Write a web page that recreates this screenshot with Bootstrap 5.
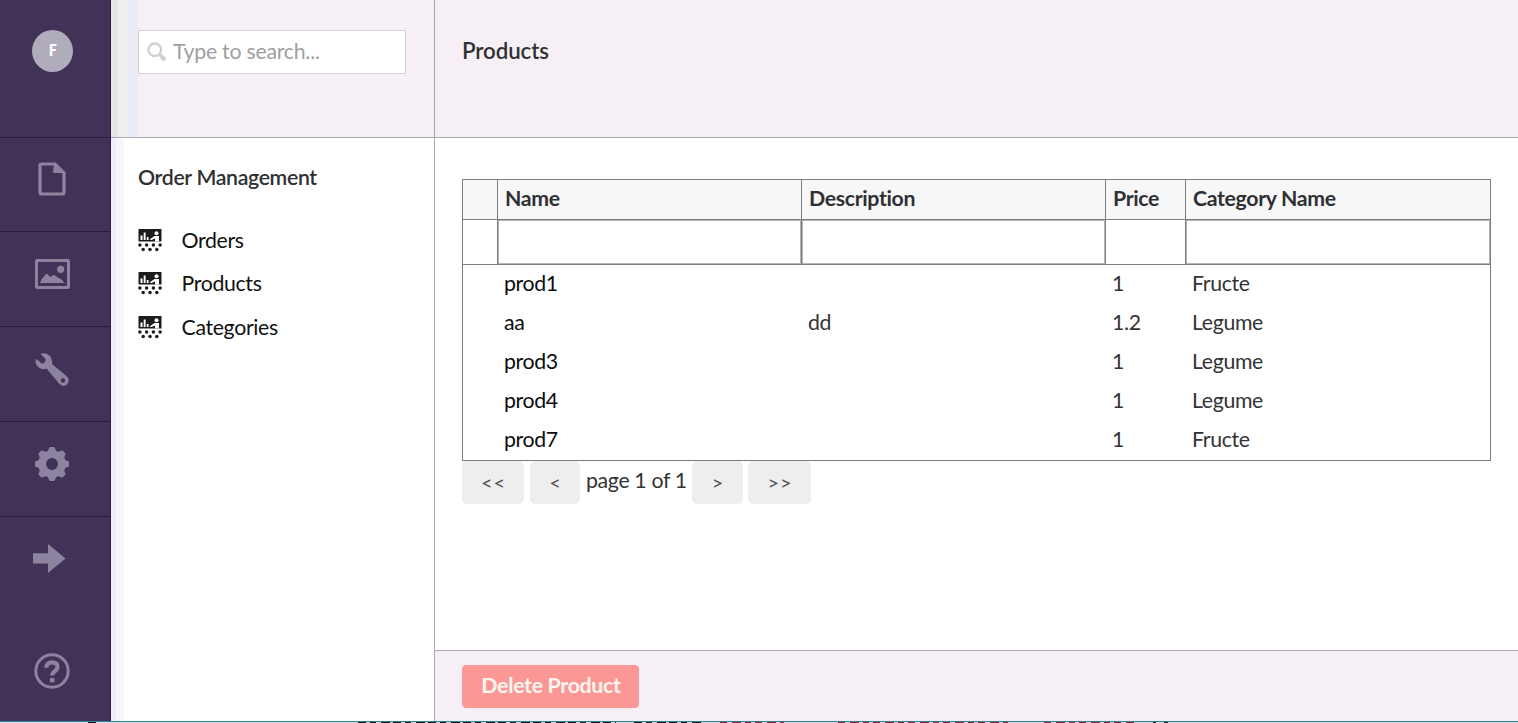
<!DOCTYPE html>
<html lang="en">
<head>
<meta charset="utf-8">
<meta name="viewport" content="width=device-width, initial-scale=1">
<title>Products</title>
<link href="https://cdn.jsdelivr.net/npm/bootstrap@5.3.0/dist/css/bootstrap.min.css" rel="stylesheet">
<style>
  body { font-family: Lato, "Liberation Sans", sans-serif; font-size: 21.3px; line-height: 28px; letter-spacing: -.35px; color: #343434; overflow: hidden; }
  .app-shell { height: 721px; }
  .rail { width: 111px; background: #413358; border-right: 1px solid #2b1f42; }
  .rail-cell { height: 95px; border-top: 1px solid #291c42; color: #8d839e; padding-right: 6px; }
  .rail-cell:nth-child(2) { height: 94px; }
  .rail-cell svg, .rail-help svg { display: block; }
  .rail-user { height: 137px; padding: 30px 0 0 32px; }
  .avatar { width: 41px; height: 42px; background: #b1acbc; color: #fff; font: 700 15.5px/40px "Open Sans", sans-serif; text-align: center; }
  .rail-help { color: #8d839e; padding: 0 6px 32px 0; }
  .tree { width: 324px; border-right: 1px solid #aba8b5; background: linear-gradient(90deg, #f0eff9 5px, #f7f7f7 5px 13px, #fff 13px); }
  .tree-head { height: 138px; border-bottom: 1px solid #aeabb5; padding: 30px 28px 0 27px; background: linear-gradient(90deg, #e5e5e5 7px, #eee 7px 17px, #ececf7 17px 27px, #f6eff6 27px); }
  .search-box { height: 44px; border: 1px solid #d5d3d7; background: #fff; padding: 0 8px; gap: 6px; }
  .search-box input { border: 0; padding: 0 0 2px; outline: 0; background: none; min-width: 0; line-height: 28px; letter-spacing: -.25px; }
  .search-box input::placeholder { color: #a0a0a0; opacity: 1; }
  .tree-body { padding: 25px 27px 0; }
  .strong-text { font-weight: 600; color: #303033; }
  .tree-title { margin: 0 0 35px; font-size: 21.3px; line-height: 28px; }
  .tree-link { height: 43.5px; color: #111; gap: 19.5px; text-decoration: none; }
  .tree-link:nth-of-type(1) { height: 43px; }
  .tree-link:nth-of-type(2) { height: 44px; }
  .tree-link svg { margin-top: 2px; }
  .editor-head { height: 138px; border-bottom: 1px solid #aeabb5; background: #f6eff6; padding: 37px 27px 0; font-size: 22.3px; letter-spacing: -.1px; }
  .editor-body { padding: 41px 27px 0; }
  .editor-foot { height: 71px; border-top: 1px solid #aeabb5; background: #f6eff6; padding: 14px 27px 0; }
  .grid-table { width: 1029px; table-layout: fixed; border-collapse: collapse; border: 1px solid #7c7c7c; }
  .grid-table th { height: 40px; padding: 0 7px 3px; border: 1px solid #7c7c7c; background: #f7f7f8; white-space: nowrap; }
  .grid-table .filters td { height: 45px; padding: 0; border: 1px solid #7c7c7c; }
  .filters input { display: block; width: 100%; height: 44px; border: 1px solid #b5b5b5; border-radius: 0; padding: 0 6px; outline: 0; }
  .grid-table tbody td { height: 39px; padding: 0 6.5px 2px; vertical-align: middle; }
  .grid-table tbody tr:last-child td { height: 40px; padding-bottom: 3px; }
  .grid-table tbody td:nth-child(2) { color: #0c0c0c; }
  .pager { gap: 6px; }
  .pager-text { width: 100px; padding-top: 5px; white-space: nowrap; }
  .pager .btn { --bs-btn-font-size: 20px; --bs-btn-bg: #eee; --bs-btn-color: #555; --bs-btn-border-color: #eee; height: 43px; padding: 0 0 2px 1px; border-radius: 5px; letter-spacing: .8px; }
  .pager .btn:last-child { margin-left: -1px; }
  .btn-delete { --bs-btn-bg: #fb9896; --bs-btn-color: #fdf5ef; --bs-btn-border-color: #fb9896; width: 177px; height: 43px; padding: 0 0 2px 1px; border-radius: 4px; font-size: 21.3px; font-weight: 700; line-height: 39px; letter-spacing: -.3px; }
  .desk-edge { height: 2px; border-top: 1px solid #357fa5; background: #d5dbe4; }
  .desk-edge svg { display: block; }
</style>
</head>
<body>
<svg class="d-none">
  <symbol id="presentation" viewBox="0 0 24 24">
    <path d="M.500 1h23v12.500H.500z" fill="#1c1c1c"/>
    <path d="M2.500 7.500h2V12h-2zM5.700 4.500h1.900V12H5.700zM8.800 9h1.700v3H8.800z" fill="#fff"/>
    <circle cx="18.500" cy="5.300" r="2" fill="#fff"/>
    <path d="M11.500 11.500l5-3.500H21v5.500h-4v-3l-3.500 1.500z" fill="#fff"/>
    <g fill="#1c1c1c"><circle cx="1.900" cy="17" r="1.750"/><circle cx="8.600" cy="17" r="1.750"/><circle cx="15.400" cy="17" r="1.750"/><circle cx="22.100" cy="17" r="1.750"/><circle cx="5.200" cy="21.500" r="1.750"/><circle cx="12" cy="21.500" r="1.750"/><circle cx="18.800" cy="21.500" r="1.750"/></g>
  </symbol>
</svg>

<div class="app-shell d-flex">
  <nav class="rail d-flex flex-column flex-shrink-0">
    <div class="rail-user"><div class="avatar rounded-circle">F</div></div>
    <a class="rail-cell d-flex align-items-center justify-content-center" href="#" aria-label="Content">
      <svg width="28" height="34" viewBox="0 0 28 34" style="margin-top:-12px"><path d="M2 3.500Q2 2 3.500 2H17l9 9v19.500Q26 32 24.500 32h-21Q2 32 2 30.500z" fill="none" stroke="currentColor" stroke-width="3.200"/><path d="M16 1l11 10H15z" fill="currentColor"/></svg>
    </a>
    <a class="rail-cell d-flex align-items-center justify-content-center" href="#" aria-label="Media">
      <svg width="35" height="30" viewBox="0 0 35 30" style="margin-top:-10px"><rect x="1.500" y="1.500" width="32" height="27" rx="1" fill="none" stroke="currentColor" stroke-width="3"/><circle cx="25.700" cy="10.300" r="3.600" fill="currentColor"/><path d="M5 24l1.500-3.500 4.500-5.500h1.500l2.500 3 3-1.800h1.500L27 21l2.300 3z" fill="currentColor"/></svg>
    </a>
    <a class="rail-cell d-flex align-items-center justify-content-center" href="#" aria-label="Settings">
      <svg width="34" height="34" viewBox="0 0 34 34" style="margin-top:-9px"><path d="M5.500.8L10.500 6Q11 9 8.500 10.200L7 10.500.9 5.800Q-.5 11.500 4.500 15 8 17 11.500 15.500L24 30.500Q28 34.500 31.500 31.800 35.500 28 32 23.500L17 11Q18 6 14.500 2.500 10.500-.9 5.500.8zM28 25.300a2.200 2.200 0 1 1 0 4.400 2.200 2.200 0 0 1 0-4.400z" fill="currentColor" fill-rule="evenodd"/></svg>
    </a>
    <a class="rail-cell d-flex align-items-center justify-content-center" href="#" aria-label="Developer">
      <svg width="34" height="34" viewBox="-17 -17 34 34" style="margin-top:-10px"><defs><path id="cog" d="M-4.500-12l1.700-4.300q.3-.7 1-.7h3.600q.7 0 1 .7L4.500-12z"/></defs><g fill="currentColor"><path d="M0-13.800a13.800 13.800 0 1 1 0 27.600 13.800 13.800 0 0 1 0-27.600zM0-6a6 6 0 1 0 0 12A6 6 0 0 0 0-6z" fill-rule="evenodd"/><use href="#cog"/><use href="#cog" transform="rotate(45)"/><use href="#cog" transform="rotate(90)"/><use href="#cog" transform="rotate(135)"/><use href="#cog" transform="rotate(180)"/><use href="#cog" transform="rotate(225)"/><use href="#cog" transform="rotate(270)"/><use href="#cog" transform="rotate(315)"/></g></svg>
    </a>
    <a class="rail-cell d-flex align-items-center justify-content-center" href="#" aria-label="Users">
      <svg width="33" height="29" viewBox="0 0 33 29" style="margin:-12px 6px 0 0"><path d="M0 9.300h15V0l17.500 14.500L15 29v-9.500H0z" fill="currentColor"/></svg>
    </a>
    <a class="rail-help mt-auto d-flex justify-content-center" href="#" aria-label="Help">
      <svg width="36" height="36" viewBox="0 0 36 36"><circle cx="18" cy="18" r="16.200" fill="none" stroke="currentColor" stroke-width="3"/><path d="M12.300 14.800q0-5.500 5.700-5.500 5.500 0 5.500 4.700 0 2.500-2.700 4.200-2.500 1.600-2.500 4.300" fill="none" stroke="currentColor" stroke-width="4.200"/><path d="M16 25h4.500v4.300H16z" fill="currentColor"/></svg>
    </a>
  </nav>

  <aside class="tree flex-shrink-0">
    <div class="tree-head">
      <label class="search-box d-flex align-items-center">
        <svg class="flex-shrink-0" width="20" height="20" viewBox="0 0 20 20" fill="none" stroke="#d0d0d0"><circle cx="7.800" cy="7.800" r="6.300" stroke-width="2.400"/><path d="M12.300 12.300l1.500 1.500" stroke-width="2.400"/><path d="M13.500 13.500l4.500 4.500" stroke-width="4"/></svg>
        <input class="flex-grow-1" type="text" placeholder="Type to search...">
      </label>
    </div>
    <div class="tree-body">
      <h5 class="tree-title strong-text">Order Management</h5>
      <a class="tree-link d-flex" href="#"><svg width="24" height="24"><use href="#presentation"/></svg>Orders</a>
      <a class="tree-link d-flex" href="#"><svg width="24" height="24"><use href="#presentation"/></svg>Products</a>
      <a class="tree-link d-flex" href="#"><svg width="24" height="24"><use href="#presentation"/></svg>Categories</a>
    </div>
  </aside>

  <main class="d-flex flex-column flex-grow-1">
    <header class="editor-head strong-text">Products</header>
    <section class="editor-body flex-grow-1">
      <table class="grid-table">
        <colgroup><col style="width:35px"><col style="width:304px"><col style="width:304px"><col style="width:80px"><col style="width:305px"></colgroup>
        <thead>
          <tr class="strong-text"><th></th><th>Name</th><th>Description</th><th>Price</th><th>Category Name</th></tr>
          <tr class="filters"><td></td><td><input type="text" aria-label="Name"></td><td><input type="text" aria-label="Description"></td><td></td><td><input type="text" aria-label="Category"></td></tr>
        </thead>
        <tbody>
          <tr><td></td><td>prod1</td><td></td><td>1</td><td>Fructe</td></tr>
          <tr><td></td><td>aa</td><td>dd</td><td>1.2</td><td>Legume</td></tr>
          <tr><td></td><td>prod3</td><td></td><td>1</td><td>Legume</td></tr>
          <tr><td></td><td>prod4</td><td></td><td>1</td><td>Legume</td></tr>
          <tr><td></td><td>prod7</td><td></td><td>1</td><td>Fructe</td></tr>
        </tbody>
      </table>
      <div class="pager d-flex">
        <button class="btn" style="width:62px">&lt;&lt;</button>
        <button class="btn" style="width:50px">&lt;</button>
        <span class="pager-text">page 1 of 1</span>
        <button class="btn" style="width:51px">&gt;</button>
        <button class="btn" style="width:63px">&gt;&gt;</button>
      </div>
    </section>
    <footer class="editor-foot"><button class="btn btn-delete">Delete Product</button></footer>
  </main>
</div>
<div class="desk-edge">
  <svg width="1518" height="1" fill="none" stroke-width="2"><path d="M88 .5h10M358 .5h258M634 .5h68" stroke="#15151c" stroke-dasharray="8 4 6 5 9 3"/><path d="M720 .5h64M838 .5h170M1044 .5h90" stroke="#7c2a35" stroke-dasharray="7 5 9 4 6 4"/><path d="M1153 .5h3M1164 .5h4" stroke="#15151c"/></svg>
</div>
<script src="https://cdn.jsdelivr.net/npm/bootstrap@5.3.0/dist/js/bootstrap.bundle.min.js"></script>
</body>
</html>
